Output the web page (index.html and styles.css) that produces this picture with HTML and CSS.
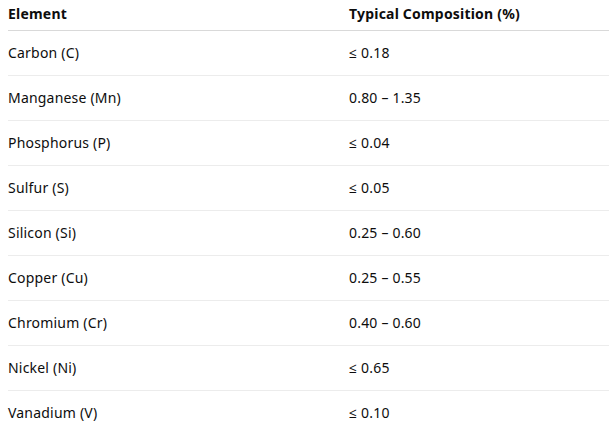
FILE: index.html
```html
<!DOCTYPE html>
<html>
<head>
<meta charset="utf-8">
<link rel="stylesheet" href="styles.css">
</head>
<body>
<table class="comp">
  <thead>
    <tr><th class="c1">Element</th><th class="c2">Typical Composition (%)</th></tr>
  </thead>
  <tbody>
    <tr><td>Carbon (C)</td><td>≤ 0.18</td></tr>
    <tr><td>Manganese (Mn)</td><td>0.80 – 1.35</td></tr>
    <tr><td>Phosphorus (P)</td><td>≤ 0.04</td></tr>
    <tr><td>Sulfur (S)</td><td>≤ 0.05</td></tr>
    <tr><td>Silicon (Si)</td><td>0.25 – 0.60</td></tr>
    <tr><td>Copper (Cu)</td><td>0.25 – 0.55</td></tr>
    <tr><td>Chromium (Cr)</td><td>0.40 – 0.60</td></tr>
    <tr><td>Nickel (Ni)</td><td>≤ 0.65</td></tr>
    <tr><td>Vanadium (V)</td><td>≤ 0.10</td></tr>
  </tbody>
</table>
</body>
</html>
```
FILE: styles.css
```css
html, body {
  margin: 0;
  padding: 0;
  background: #ffffff;
}
body {
  padding-left: 8px;
  font-family: "Noto Sans", "Open Sans", sans-serif;
  font-size: 14px;
  letter-spacing: 0.2px;
  color: #0d0d0d;
}
.comp {
  border-collapse: collapse;
  width: 601px;
}
.comp th {
  text-align: left;
  font-weight: 700;
  height: 30px;
  padding: 0;
  vertical-align: top;
  line-height: 28px;
  border-bottom: 1px solid #d9d9d9;
}
.comp .c1 {
  width: 341px;
}
.comp td {
  height: 44px;
  padding: 0;
  line-height: 44px;
  border-bottom: 1px solid #ececec;
}
.comp tbody tr:last-child td {
  border-bottom: none;
}
```
